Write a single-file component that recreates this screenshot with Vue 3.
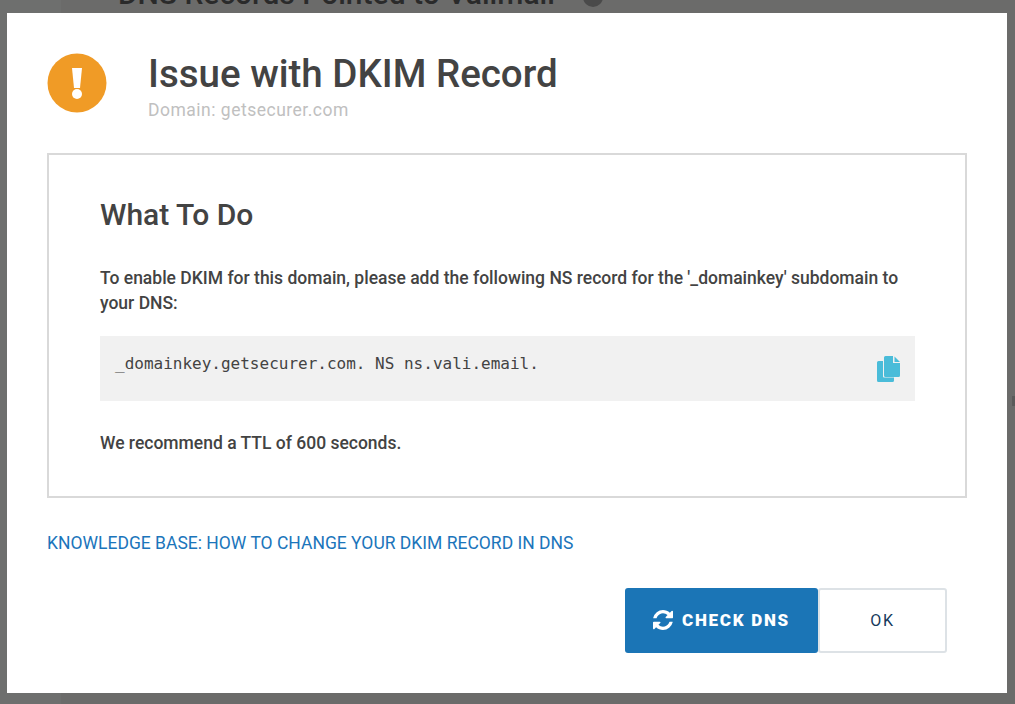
<template>
  <div class="page">
    <div class="backdrop">
      <div class="backdrop-side"></div>
      <div class="backdrop-main">
        <span class="backdrop-title">DNS Records Pointed to Valimail</span>
        <span class="backdrop-help"></span>
        <span class="backdrop-mark"></span>
      </div>
    </div>

    <div class="modal">
      <header class="modal-head">
        <svg class="warn-icon" viewBox="0 0 60 60" aria-hidden="true">
          <circle cx="30" cy="30" r="29.500" fill="#f09b26" />
          <path d="M25 15h10l-2 20h-6z" fill="#fff" />
          <circle cx="30" cy="41" r="5" fill="#fff" />
        </svg>
        <div>
          <h1>{{ title }}</h1>
          <p class="domain">Domain: {{ domain }}</p>
        </div>
      </header>

      <section class="todo">
        <h2>What To Do</h2>
        <p class="text">
          To enable DKIM for this domain, please add the following NS record for the '_domainkey' subdomain to your DNS:
        </p>
        <div class="record">
          <code>{{ record }}</code>
          <svg class="copy-icon" viewBox="0 0 23 26" aria-hidden="true">
            <path d="M1.500 5H6v15.500a1 1 0 0 0 1 1h10V24.500a1.500 1.500 0 0 1-1.500 1.500h-14A1.500 1.500 0 0 1 0 24.500V6.500A1.500 1.500 0 0 1 1.500 5z" fill="#4abcd9" />
            <path d="M8.500 0H16v7h7v12.500a1.500 1.500 0 0 1-1.500 1.500h-13A1.500 1.500 0 0 1 7 19.500v-18A1.500 1.500 0 0 1 8.500 0z" fill="#4abcd9" />
            <path d="M17.500 0.500L23 6h-5.500z" fill="#4abcd9" />
          </svg>
        </div>
        <p class="text">We recommend a TTL of 600 seconds.</p>
      </section>

      <a class="kb-link" href="#">KNOWLEDGE BASE: HOW TO CHANGE YOUR DKIM RECORD IN DNS</a>

      <footer class="actions">
        <button class="btn primary" type="button">
          <svg class="sync-icon" viewBox="128 128 1536 1536" aria-hidden="true">
            <path d="M1639 1056q0 5-1 7-64 268-268 434.500t-478 166.500q-146 0-282.500-55t-243.500-157l-129 129q-19 19-45 19t-45-19-19-45v-448q0-26 19-45t45-19h448q26 0 45 19t19 45-19 45l-137 137q71 66 161 102t187 36q134 0 250-65t186-179q11-17 53-117 8-23 30-23h192q13 0 22.500 9.500t9.500 22.500zm25-800v448q0 26-19 45t-45 19h-448q-26 0-45-19t-19-45 19-45l138-138q-148-137-349-137-134 0-250 65t-186 179q-11 17-53 117-8 23-30 23h-199q-13 0-22.500-9.500t-9.500-22.500v-7q65-268 270-434.500t480-166.500q146 0 284 55.500t245 156.500l130-129q19-19 45-19t45 19 19 45z" fill="#fff" />
          </svg>
          CHECK DNS
        </button>
        <button class="btn plain" type="button">OK</button>
      </footer>
    </div>
  </div>
</template>

<script setup>
const title = 'Issue with DKIM Record'
const domain = 'getsecurer.com'
const record = '_domainkey.getsecurer.com. NS ns.vali.email.'
</script>

<style>
html, body {
  margin: 0;
  height: 100%;
  overflow: hidden;
}
</style>

<style scoped>
.page {
  position: relative;
  width: 1015px;
  height: 704px;
  box-sizing: border-box;
  padding: 13px 8px 11px 7px;
  background: #6b6c6b;
  font-family: Roboto, "Liberation Sans", sans-serif;
  color: #434343;
  overflow: hidden;
}
.backdrop {
  position: absolute;
  inset: 0;
  display: flex;
}
.backdrop-side {
  width: 61px;
  background: #6e6f6e;
}
.backdrop-main {
  position: relative;
  flex: 1;
  display: flex;
  align-items: flex-start;
  gap: 28px;
  padding-left: 57px;
  background: #6b6b6a;
}
.backdrop-title {
  margin-top: -24px;
  font-size: 30px;
  font-weight: 500;
  line-height: 36px;
  color: #2a2a2a;
  white-space: nowrap;
}
.backdrop-help {
  width: 20px;
  height: 20px;
  margin-top: -13px;
  border-radius: 50%;
  background: #4a4a4a;
}
.backdrop-mark {
  position: absolute;
  top: 396px;
  right: 0;
  width: 3px;
  height: 10px;
  background: #5a5a5a;
}
.modal {
  position: relative;
  height: 680px;
  box-sizing: border-box;
  padding: 40px 40px 0;
  background: #fff;
}
.modal-head {
  display: flex;
  gap: 41px;
  height: 100px;
}
.warn-icon {
  width: 60px;
  height: 60px;
  flex: none;
}
h1 {
  margin: -1px 0 0;
  font-size: 38.500px;
  font-weight: 500;
  line-height: 44px;
}
.domain {
  margin: 4px 0 0;
  font-size: 17.500px;
  line-height: 20px;
  letter-spacing: 0.500px;
  color: #c0c0c0;
}
.todo {
  box-sizing: border-box;
  height: 345px;
  padding: 42px 50px 0 51px;
  border: 2px solid #d9d9d9;
}
h2 {
  margin: 0 0 33px;
  font-size: 30px;
  font-weight: 500;
  line-height: 36px;
}
.text {
  margin: 0;
  font-size: 17.500px;
  font-weight: 500;
  line-height: 25px;
}
.record {
  display: flex;
  justify-content: space-between;
  height: 65px;
  box-sizing: border-box;
  margin: 20px 0 30px;
  padding: 16px 15px 0;
  background: #f1f1f1;
}
code {
  font-family: "DejaVu Sans Mono", monospace;
  font-size: 16px;
  line-height: 24px;
  color: #434343;
}
.copy-icon {
  width: 23px;
  height: 26px;
  margin-top: 4px;
}
.kb-link {
  display: block;
  margin-top: 34px;
  font-size: 17.500px;
  line-height: 22px;
  color: #1b75bb;
  text-decoration: none;
}
.actions {
  display: flex;
  justify-content: flex-end;
  margin-top: 34px;
  padding-right: 20px;
}
.btn {
  box-sizing: border-box;
  height: 65px;
  border-radius: 3px;
  font-family: inherit;
  font-size: 17px;
}
.primary {
  display: flex;
  align-items: center;
  justify-content: center;
  gap: 9px;
  width: 193px;
  padding: 0 0 2px;
  border: none;
  background: #1b75b6;
  color: #fff;
  font-weight: 900;
  letter-spacing: 1.700px;
}
.sync-icon {
  width: 20px;
  height: 20px;
}
.plain {
  width: 129px;
  border: 2px solid #dde2e6;
  background: #fff;
  color: #15395b;
  font-size: 16px;
  font-weight: 400;
  letter-spacing: 1.750px;
}
</style>
